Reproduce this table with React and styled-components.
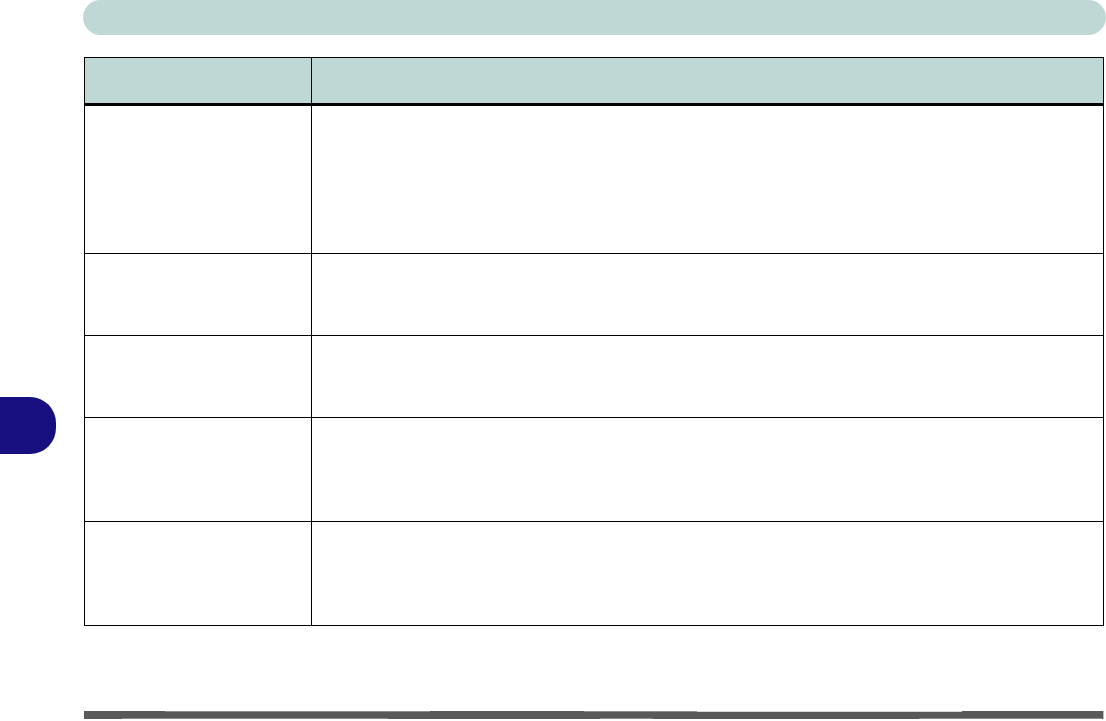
import React from "react";
import styled, { createGlobalStyle } from "styled-components";

const Global = createGlobalStyle`
  *, *::before, *::after { box-sizing: border-box; }
  html, body { margin: 0; padding: 0; background: #ffffff; }
  body { font-family: "Liberation Sans", Arial, sans-serif; }
`;

const TEAL = "#c0d8d5";

const Page = styled.div`
  width: 1106px;
  height: 721px;
  display: flex;
  flex-direction: row;
  overflow: hidden;
  background: #ffffff;
`;

const Gutter = styled.div`
  width: 84px;
  flex: 0 0 84px;
  padding-top: 397px;
`;

const ChapterTab = styled.div`
  width: 56px;
  height: 57px;
  background: #170f80;
  border-radius: 0 26px 26px 0;
`;

const Main = styled.div`
  width: 1020px;
  display: flex;
  flex-direction: column;
`;

const TopBar = styled.div`
  height: 35px;
  margin: 0 -2px 0 -1px;
  background: ${TEAL};
  border-radius: 18px;
`;

const Table = styled.div`
  margin-top: 22px;
  border: 1px solid #000;
  display: flex;
  flex-direction: column;
  width: 1020px;
`;

const Row = styled.div`
  display: grid;
  grid-template-columns: 226px 1px 1fr;
  height: ${(p) => p.$h}px;
  background: ${(p) => (p.$head ? TEAL : "#fff")};
  border-bottom: ${(p) => (p.$last ? "none" : p.$head ? "3px solid #000" : "1px solid #000")};
`;

const Cell = styled.div``;

const Divider = styled.div`
  background: #000;
`;

const Spacer = styled.div`
  flex: 1;
`;

const FooterBar = styled.div`
  height: 8px;
  margin-bottom: 2px;
  background-color: #595959;
  background-image:
    linear-gradient(to right,
      transparent 0, transparent 81px,
      #8c8c8c 81px, #8c8c8c 346px,
      transparent 346px, transparent 500px,
      #8c8c8c 500px, #8c8c8c 613px,
      #d8d8d8 613px, #d8d8d8 878px,
      transparent 878px),
    linear-gradient(to right,
      transparent 0, transparent 38px,
      #8c8c8c 38px, #8c8c8c 304px,
      transparent 304px, transparent 516px,
      #8c8c8c 516px, #8c8c8c 569px,
      transparent 569px, transparent 835px,
      #8c8c8c 835px, #8c8c8c 1018px,
      transparent 1018px);
  background-size: 100% 1px, 100% 1px;
  background-position: 0 0, 0 100%;
  background-repeat: no-repeat;
  border-right: 1px solid #bdbdbd;
`;

const rows = [148, 82, 82, 104, 103];

export default function App() {
  return (
    <>
      <Global />
      <Page>
        <Gutter>
          <ChapterTab />
        </Gutter>
        <Main>
          <TopBar />
          <Table>
            <Row $head $h={48}>
              <Cell />
              <Divider />
              <Cell />
            </Row>
            {rows.map((h, i) => (
              <Row key={i} $h={h} $last={i === rows.length - 1}>
                <Cell />
                <Divider />
                <Cell />
              </Row>
            ))}
          </Table>
          <Spacer />
          <FooterBar />
        </Main>
      </Page>
    </>
  );
}
